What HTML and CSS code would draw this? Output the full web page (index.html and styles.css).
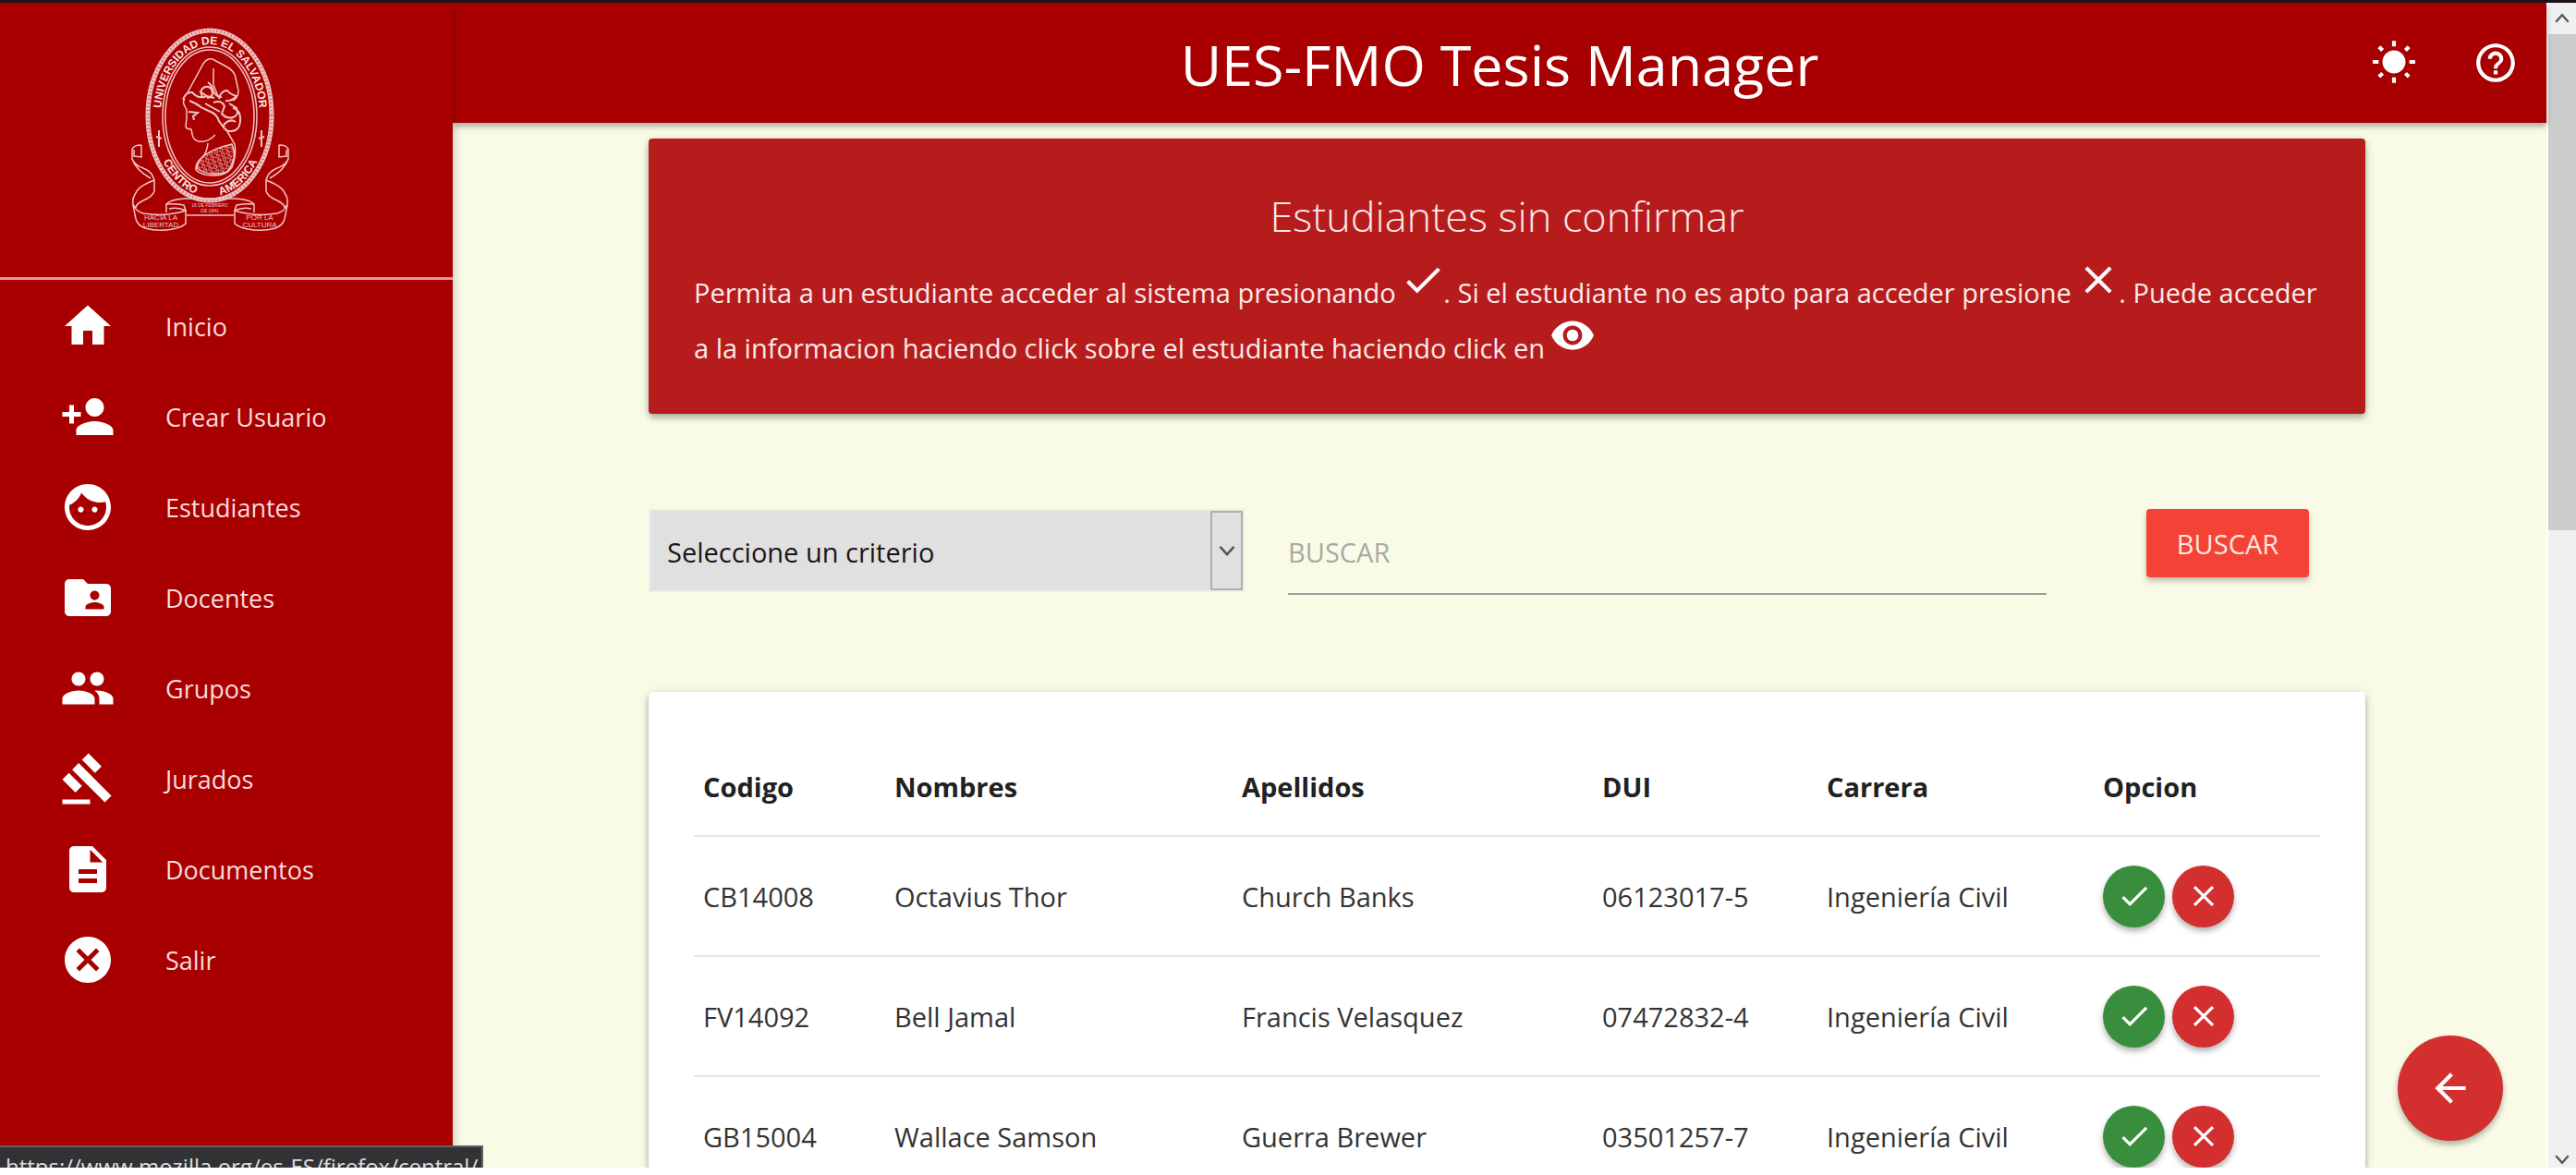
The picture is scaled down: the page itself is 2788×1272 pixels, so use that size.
FILE: index.html
```html
<!DOCTYPE html>
<html lang="es">
<head>
<meta charset="utf-8">
<title>UES-FMO Tesis Manager</title>
<link rel="stylesheet" href="styles.css">
</head>
<body>
<svg class="sprite" aria-hidden="true">
  <symbol id="home" viewBox="0 0 24 24"><path d="M10 20v-6h4v6h5v-8h3L12 3 2 12h3v8z"/></symbol>
  <symbol id="person-add" viewBox="0 0 24 24"><path d="M15 12c2.210 0 4-1.790 4-4s-1.790-4-4-4-4 1.790-4 4 1.790 4 4 4zm-9-2V7H4v3H1v2h3v3h2v-3h3v-2H6zm9 4c-2.670 0-8 1.340-8 4v2h16v-2c0-2.660-5.330-4-8-4z"/></symbol>
  <symbol id="face" viewBox="0 0 24 24"><path d="M9 11.750c-.69 0-1.250.56-1.250 1.250s.56 1.250 1.250 1.250 1.250-.56 1.250-1.250-.56-1.250-1.250-1.250zm6 0c-.69 0-1.250.56-1.250 1.250s.56 1.250 1.250 1.250 1.250-.56 1.250-1.250-.56-1.250-1.250-1.250zM12 2C6.480 2 2 6.480 2 12s4.480 10 10 10 10-4.480 10-10S17.520 2 12 2zm0 18c-4.410 0-8-3.590-8-8 0-.29.02-.58.05-.86 2.360-1.050 4.230-2.980 5.210-5.370C11.070 8.330 14.050 10 17.420 10c.78 0 1.530-.09 2.250-.26.21.71.33 1.470.33 2.260 0 4.410-3.590 8-8 8z"/></symbol>
  <symbol id="folder-shared" viewBox="0 0 24 24"><path d="M20 6h-8l-2-2H4c-1.100 0-1.990.9-1.990 2L2 18c0 1.100.9 2 2 2h16c1.100 0 2-.9 2-2V8c0-1.100-.9-2-2-2zm-5 3c1.100 0 2 .9 2 2s-.9 2-2 2-2-.9-2-2 .9-2 2-2zm4 8h-8v-1c0-1.330 2.670-2 4-2s4 .67 4 2v1z"/></symbol>
  <symbol id="group" viewBox="0 0 24 24"><path d="M16 11c1.660 0 2.990-1.340 2.990-3S17.660 5 16 5c-1.660 0-3 1.340-3 3s1.340 3 3 3zm-8 0c1.660 0 2.990-1.340 2.990-3S9.660 5 8 5C6.340 5 5 6.340 5 8s1.340 3 3 3zm0 2c-2.330 0-7 1.170-7 3.500V19h14v-2.500c0-2.330-4.670-3.500-7-3.500zm8 0c-.29 0-.62.02-.97.05 1.160.84 1.970 1.970 1.970 3.450V19h6v-2.500c0-2.330-4.670-3.500-7-3.500z"/></symbol>
  <symbol id="gavel" viewBox="0 0 24 24"><path d="M1 21h12v2H1zM5.245 8.070l2.830-2.827 14.140 14.142-2.828 2.828zM12.317 1l5.657 5.656-2.830 2.830-5.654-5.660zM3.825 9.485l5.657 5.657-2.828 2.828-5.657-5.657z"/></symbol>
  <symbol id="description" viewBox="0 0 24 24"><path d="M14 2H6c-1.100 0-1.990.9-1.990 2L4 20c0 1.100.89 2 1.990 2H18c1.100 0 2-.9 2-2V8l-6-6zm2 16H8v-2h8v2zm0-4H8v-2h8v2zm-3-5V3.500L18.500 9H13z"/></symbol>
  <symbol id="cancel" viewBox="0 0 24 24"><path d="M12 2C6.470 2 2 6.470 2 12s4.470 10 10 10 10-4.470 10-10S17.530 2 12 2zm5 13.590L15.590 17 12 13.410 8.410 17 7 15.590 10.590 12 7 8.410 8.410 7 12 10.590 15.590 7 17 8.410 13.410 12 17 15.590z"/></symbol>
  <symbol id="sunny" viewBox="0 0 24 24"><path d="M6.760 4.840l-1.800-1.790-1.410 1.410 1.790 1.790 1.420-1.410zM4 10.500H1v2h3v-2zm9-9.950h-2V3.500h2V.55zm7.450 3.910l-1.410-1.410-1.790 1.790 1.410 1.410 1.790-1.790zm-3.210 13.700l1.790 1.800 1.410-1.410-1.800-1.790-1.400 1.400zM20 10.500v2h3v-2h-3zm-8-5c-3.310 0-6 2.690-6 6s2.690 6 6 6 6-2.690 6-6-2.690-6-6-6zm-1 16.950h2V19.500h-2v2.950zm-7.450-3.910l1.410 1.410 1.790-1.800-1.410-1.410-1.790 1.800z"/></symbol>
  <symbol id="help" viewBox="0 0 24 24"><path d="M11 18h2v-2h-2v2zm1-16C6.480 2 2 6.480 2 12s4.480 10 10 10 10-4.480 10-10S17.520 2 12 2zm0 18c-4.410 0-8-3.590-8-8s3.590-8 8-8 8 3.590 8 8-3.590 8-8 8zm0-14c-2.210 0-4 1.790-4 4h2c0-1.100.9-2 2-2s2 .9 2 2c0 2-3 1.750-3 5h2c0-2.250 3-2.500 3-5 0-2.210-1.790-4-4-4z"/></symbol>
  <symbol id="check" viewBox="0 0 24 24"><path d="M9 16.170L4.830 12l-1.420 1.410L9 19 21 7l-1.410-1.410z"/></symbol>
  <symbol id="close" viewBox="0 0 24 24"><path d="M19 6.410L17.590 5 12 10.590 6.410 5 5 6.410 10.590 12 5 17.590 6.410 19 12 13.410 17.590 19 19 17.590 13.410 12z"/></symbol>
  <symbol id="eye" viewBox="0 0 24 24"><path d="M12 4.500C7 4.500 2.730 7.610 1 12c1.730 4.390 6 7.500 11 7.500s9.270-3.110 11-7.500c-1.730-4.390-6-7.500-11-7.500zM12 17c-2.760 0-5-2.240-5-5s2.240-5 5-5 5 2.240 5 5-2.240 5-5 5zm0-8c-1.660 0-3 1.340-3 3s1.340 3 3 3 3-1.340 3-3-1.340-3-3-3z"/></symbol>
  <symbol id="back" viewBox="0 0 24 24"><path d="M20 11H7.830l5.590-5.590L12 4l-8 8 8 8 1.410-1.410L7.830 13H20v-2z"/></symbol>
  <symbol id="chevron" viewBox="0 0 24 24"><path d="M3 7l9 10 9-10" fill="none" stroke="currentColor"/></symbol>
</svg>
<div class="app">
  <aside class="sidebar">
    <div class="brand">
      <svg class="seal" viewBox="0 0 180 230" role="img" aria-label="Universidad de El Salvador, Centro América">
        <defs>
          <path id="arc-top" d="M36 101V97A53.500 78 0 0 1 143 97V101"/>
          <path id="arc-bottom" d="M28 97A61 86 0 0 0 151 97"/>
          <pattern id="scales" width="6" height="5" patternUnits="userSpaceOnUse" patternTransform="rotate(-20)"><path d="M0 1q1.500 3 3 0t3 0M0 4h4"/></pattern>
          <g id="ribbon">
            <path d="M15 128q-9 0-10 5v10q3 7 12 10 10 4 12 13v12q-2 6-12 10-8 4-8 8M15 128v13l-8-1v-7M5 143q4 12 20 21M29 166q-18 7-20 14-4 5-3 13l3 15q2 7 10 10 14 4 30 1 10-2 14-6v-14q-22 7-46 3-9-3-10-9"/>
            <path d="M42 201v-9q4-5 20-6h28M42 192q9-1 19 1l2 6M64 204h26M45 197q10-2 18 2"/>
          </g>
        </defs>
        <g class="lines">
          <ellipse class="rope" cx="89" cy="96" rx="67" ry="92"/>
          <ellipse class="twist" cx="89" cy="96" rx="67" ry="92"/>
          <ellipse cx="89" cy="97" rx="51" ry="75"/>
          <ellipse cx="89" cy="97" rx="48" ry="72"/>
          <path d="M64 73L82 40q4-6 10-5l15 8q9 5 10 12l3 14q0 8-6 11M93 45v18l5 12M62 78q-3 3 0 8l2 4v9l-1 9q1 3 6 3l1 5q1 7 7 8 9 2 18-7M87 126q-1 11-7 16-7 6-6 13 6 6 19 6 14 0 20-9 5-12 3-25l-10-17"/>
          <path class="hair" d="M60 79q3-9 10-8 7 8 16 4M67 80q8 3 14 8l9 4q7 3 9 10l5 7M81 76q-4-8 3-11 7-1 8 6 0 6-6 6M87 60q5 4 6 10 4 7 9 6M99 78q2-9 9-9 3 4 10 6-5 6-12 5M93 82q9-3 12 4l-3 8q5 6 12 4 7-2 4-10l-8-5M114 88q9 2 8 14-1 12-12 11-8-2-5-8 7-6 12-2M84 83l16 9M78 70l8 5 8 2"/>
          <path class="hair" d="M66 92l10 1-5 4 1 4"/>
          <path class="mail" d="M75 153q1-17 38-26 7 14-5 30-20 6-33-4z"/>
          <path class="hair" d="M34 112v18M31 119l6 2M145 112v18M142 121l6-2"/>
          <use href="#ribbon"/>
          <use href="#ribbon" transform="translate(179) scale(-1 1)"/>
        </g>
        <g class="seal-text">
          <text><textPath href="#arc-top" startOffset="50%" text-anchor="middle">UNIVERSIDAD DE EL SALVADOR</textPath></text>
          <text><textPath href="#arc-bottom" startOffset="50">CENTRO</textPath></text>
          <text><textPath href="#arc-bottom" startOffset="128">AMERICA</textPath></text>
        </g>
        <g class="ribbon-text">
          <text x="36" y="209">HACIA LA</text><text x="36" y="217">LIBERTAD</text>
          <text x="143" y="209">POR LA</text><text x="143" y="217">CULTURA</text>
          <text class="date" x="89" y="195">16 DE FEBRERO</text><text class="date" x="89" y="201">DE 1841</text>
        </g>
      </svg>
    </div>
    <nav class="menu">
      <a href="#"><svg><use href="#home"/></svg>Inicio</a>
      <a href="#"><svg><use href="#person-add"/></svg>Crear Usuario</a>
      <a href="#"><svg><use href="#face"/></svg>Estudiantes</a>
      <a href="#"><svg><use href="#folder-shared"/></svg>Docentes</a>
      <a href="#"><svg><use href="#group"/></svg>Grupos</a>
      <a href="#"><svg><use href="#gavel"/></svg>Jurados</a>
      <a href="#"><svg><use href="#description"/></svg>Documentos</a>
      <a href="#"><svg><use href="#cancel"/></svg>Salir</a>
    </nav>
  </aside>
  <div class="page">
    <header class="topbar">
      <h1>UES-FMO Tesis Manager</h1>
      <div class="tools">
        <button type="button" aria-label="Tema"><svg><use href="#sunny"/></svg></button>
        <button type="button" aria-label="Ayuda"><svg><use href="#help"/></svg></button>
      </div>
    </header>
    <main class="content">
      <section class="card notice">
        <h2>Estudiantes sin confirmar</h2>
        <p>Permita a un estudiante acceder al sistema presionando <svg><use href="#check"/></svg>. Si el estudiante no es apto para acceder presione <svg><use href="#close"/></svg>. Puede acceder a la informacion haciendo click sobre el estudiante haciendo click en <svg><use href="#eye"/></svg></p>
      </section>
      <form class="search">
        <div class="picker">
          <select aria-label="Criterio"><option>Seleccione un criterio</option></select>
          <span class="arrow"><svg><use href="#chevron"/></svg></span>
        </div>
        <input type="text" placeholder="BUSCAR" aria-label="Buscar">
        <button type="button" class="submit">BUSCAR</button>
      </form>
      <section class="card list">
        <table>
          <colgroup><col class="c-code"><col class="c-name"><col class="c-last"><col class="c-dui"><col class="c-career"><col class="c-option"></colgroup>
          <thead><tr><th>Codigo</th><th>Nombres</th><th>Apellidos</th><th>DUI</th><th>Carrera</th><th>Opcion</th></tr></thead>
          <tbody>
            <tr><td>CB14008</td><td>Octavius Thor</td><td>Church Banks</td><td>06123017-5</td><td>Ingeniería Civil</td><td><div class="actions"><button type="button" class="accept" aria-label="Aceptar"><svg><use href="#check"/></svg></button><button type="button" class="reject" aria-label="Rechazar"><svg><use href="#close"/></svg></button></div></td></tr>
            <tr><td>FV14092</td><td>Bell Jamal</td><td>Francis Velasquez</td><td>07472832-4</td><td>Ingeniería Civil</td><td><div class="actions"><button type="button" class="accept" aria-label="Aceptar"><svg><use href="#check"/></svg></button><button type="button" class="reject" aria-label="Rechazar"><svg><use href="#close"/></svg></button></div></td></tr>
            <tr><td>GB15004</td><td>Wallace Samson</td><td>Guerra Brewer</td><td>03501257-7</td><td>Ingeniería Civil</td><td><div class="actions"><button type="button" class="accept" aria-label="Aceptar"><svg><use href="#check"/></svg></button><button type="button" class="reject" aria-label="Rechazar"><svg><use href="#close"/></svg></button></div></td></tr>
          </tbody>
        </table>
      </section>
    </main>
  </div>
  <div class="scrollbar" aria-hidden="true">
    <svg class="up"><use href="#chevron"/></svg>
    <div class="thumb"></div>
    <svg class="down"><use href="#chevron"/></svg>
  </div>
  <button type="button" class="fab" aria-label="Volver"><svg><use href="#back"/></svg></button>
  <div class="status">https://www.mozilla.org/es-ES/firefox/central/</div>
</div>
</body>
</html>
```
FILE: styles.css
```css
* { box-sizing: border-box; }

html, body { height: 100%; }

body {
  margin: 0;
  padding-bottom: 8px;
  overflow: hidden;
  background: #fff;
  color: #212121;
  font-family: "Open Sans", "Noto Sans", sans-serif;
  font-size: 29px;
}

h1, h2, p { margin: 0; }

svg { fill: currentColor; }

button {
  padding: 0;
  border: 0;
  color: #fff;
  font: inherit;
}

.sprite { display: none; }
#chevron { stroke-width: 3; }

.app {
  position: relative;
  display: flex;
  height: 100%;
  overflow: hidden;
  border-top: 3px solid #1c1218;
}

/* Sidebar */
.sidebar {
  flex: 0 0 490px;
  z-index: 2;
  background: #a80000;
  color: #f8dcdc;
  box-shadow: 0 4px 10px rgba(0, 0, 0, .25);
}

.brand {
  display: flex;
  justify-content: center;
  height: 300px;
  padding: 26px 34px 0 0;
  border-bottom: 3px solid #dc9a9a;
}

.seal { width: 180px; height: 230px; }
.lines { fill: none; stroke: #f0c4c4; stroke-width: 1.5; }
.lines .rope { stroke: #efc3c3; stroke-width: 5; }
.lines .twist { stroke: #c96060; stroke-width: 3; stroke-dasharray: 1 3; }
.lines .hair { stroke-width: 2; }
.lines .mail { fill: url(#scales); }
#scales path { fill: none; stroke: #f0c4c4; stroke-width: 1; }
.seal-text { fill: #fbe4e4; font-size: 12px; font-weight: 700; font-family: "Liberation Sans", sans-serif; }
.ribbon-text { fill: #f0c4c4; font-size: 8px; text-anchor: middle; font-family: "Liberation Sans", sans-serif; }
.ribbon-text .date { font-size: 5px; }

.menu a {
  display: flex;
  align-items: center;
  gap: 54px;
  height: 98px;
  padding: 2px 0 0 65px;
  color: inherit;
  font-size: 27px;
  text-decoration: none;
}

.menu svg { width: 60px; height: 60px; color: #fff; }

/* Top bar */
.page {
  flex: 1;
  min-width: 0;
  background: #f9fbe7;
}

.topbar {
  position: relative;
  display: flex;
  align-items: center;
  justify-content: center;
  height: 130px;
  background: #a80000;
  color: #fff;
  box-shadow: 0 4px 6px rgba(0, 0, 0, .3);
}

.topbar h1 { padding-top: 2px; font-size: 61px; font-weight: 400; }

.tools {
  position: absolute;
  right: 30px;
  display: flex;
  gap: 60px;
}

.tools button { display: flex; background: none; }
.tools svg { width: 50px; height: 50px; }

/* Cards */
.content { padding: 17px 196px 0 212px; }

.card {
  padding: 49px;
  border-radius: 4px;
  box-shadow: 0 4px 6px rgba(0, 0, 0, .25), 0 2px 12px rgba(0, 0, 0, .12);
}

.notice {
  height: 298px;
  padding-right: 36px;
  background: #b71c1c;
  color: #fbe9e9;
}

.notice h2 {
  padding-right: 13px;
  font-size: 45px;
  font-weight: 300;
  line-height: 70px;
  text-align: center;
}

.notice p { padding-top: 18px; line-height: 60px; }
.notice p svg { width: 50px; height: 50px; margin: -20px -3px 0; color: #fff; }

/* Search */
.search {
  display: flex;
  align-items: flex-start;
  margin-top: 103px;
  height: 198px;
}

.picker {
  display: flex;
  flex: 0 0 645px;
  height: 90px;
  background: #e0e0e0;
  border: 2px solid #eeeee6;
}

.picker select {
  flex: 1;
  padding: 2px 0 0 18px;
  border: 0;
  appearance: none;
  background: none;
  color: #1c1418;
  font: inherit;
}

.arrow {
  display: flex;
  align-items: center;
  justify-content: center;
  width: 35px;
  border: 2px solid #adb0a5;
}

.arrow svg { width: 20px; height: 20px; color: #555; }

.search input {
  flex: 1;
  min-width: 0;
  height: 93px;
  margin: 0 108px 0 47px;
  padding: 2px 0 0;
  border: 0;
  border-bottom: 2px solid #9e9e9e;
  background: none;
  font: inherit;
}

.search input::placeholder { color: #a9a9a2; opacity: 1; }

.submit {
  width: 176px;
  height: 74px;
  margin-right: 61px;
  border-radius: 4px;
  background: #f44336;
  color: #fde6e0;
  box-shadow: 0 4px 6px rgba(0, 0, 0, .25);
}

/* Table */
.list { background: #fff; }

table { width: 100%; border-collapse: collapse; table-layout: fixed; }
.c-code { width: 207px; }
.c-name { width: 376px; }
.c-last { width: 390px; }
.c-dui { width: 243px; }
.c-career { width: 299px; }
th, td { height: 130px; padding: 0 10px; text-align: left; border-bottom: 2px solid #e4e4e4; }
th { height: 107px; font-weight: 700; }
td { color: #333; }

.actions { display: flex; gap: 8px; }

.actions button {
  display: grid;
  place-items: center;
  width: 67px;
  height: 67px;
  border-radius: 50%;
  box-shadow: 0 4px 6px rgba(0, 0, 0, .3);
}

.actions svg { width: 38px; height: 38px; }
.actions .accept { background: #388e3c; }
.actions .reject { background: #d32f2f; }

/* Window furniture */
.scrollbar {
  display: flex;
  flex: 0 0 32px;
  flex-direction: column;
  border-left: 2px solid #fff;
  background: #f0f0f0;
  color: #555;
}

.scrollbar svg { width: 18px; height: 34px; margin: 0 auto; flex: none; stroke-width: 5; }
.up { transform: rotate(180deg); }
.thumb { height: 537px; margin-bottom: auto; background: #cdcdcd; }
.scrollbar .down { height: 18px; }

.fab {
  position: absolute;
  right: 79px;
  bottom: 29px;
  z-index: 3;
  display: grid;
  place-items: center;
  width: 114px;
  height: 114px;
  border-radius: 50%;
  background: #d32f2f;
  box-shadow: 0 4px 6px rgba(0, 0, 0, .3);
}

.fab svg { width: 50px; height: 50px; }

.status {
  position: absolute;
  left: 0;
  bottom: 0;
  z-index: 3;
  height: 24px;
  padding: 4px 4px 0 6px;
  overflow: hidden;
  border: solid #606064;
  border-width: 2px 2px 0 0;
  background: #323234;
  color: #ddd;
  font-size: 24px;
  line-height: 34px;
}
```
